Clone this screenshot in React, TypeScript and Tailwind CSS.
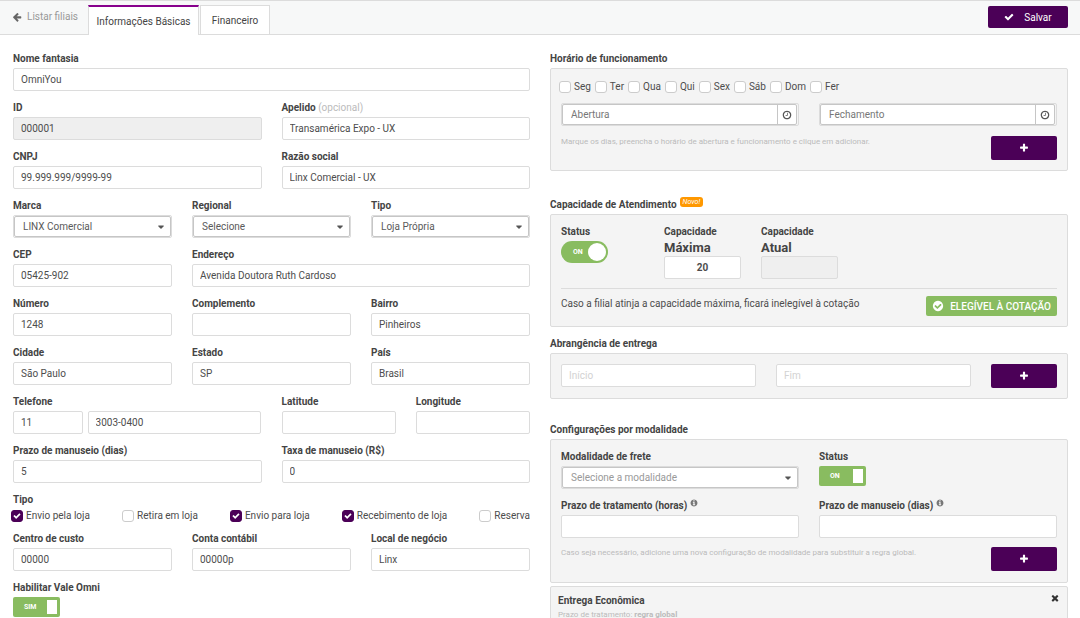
import type { ReactNode } from "react";

const CIRCLE =
  "q0 209-103 385.5t-279.5 279.5-385.5 103-385.5-103-279.5-279.5-103-385.5 103-385.5 279.5-279.5 385.5-103 385.5 103 279.5 279.5 103 385.5z";

const ICONS = {
  check:
    "M1671 566q0 40-28 68l-724 724-136 136q-28 28-68 28t-68-28l-136-136-362-362q-28-28-28-68t28-68l136-136q28-28 68-28t68 28l294 295 656-657q28-28 68-28t68 28l136 136q28 28 28 68z",
  plus: "M1600 736v192q0 40-28 68t-68 28h-416v416q0 40-28 68t-68 28h-192q-40 0-68-28t-28-68v-416h-416q-40 0-68-28t-28-68v-192q0-40 28-68t68-28h416v-416q0-40 28-68t68-28h192q40 0 68 28t28 68v416h416q40 0 68 28t28 68z",
  times:
    "M1490 1322q0 40-28 68l-136 136q-28 28-68 28t-68-28l-294-294-294 294q-28 28-68 28t-68-28l-136-136q-28-28-28-68t28-68l294-294-294-294q-28-28-28-68t28-68l136-136q28-28 68-28t68 28l294 294 294-294q28-28 68-28t68 28l136 136q28 28 28 68t-28 68l-294 294 294 294q28 28 28 68z",
  arrowLeft:
    "M1664 896v128q0 53-32.5 90.5t-84.5 37.5h-704l293 294q38 36 38 90t-38 90l-75 76q-37 37-90 37-52 0-91-37l-651-652q-37-37-37-90 0-52 37-91l651-650q38-38 91-38 52 0 90 38l75 74q38 38 38 91t-38 91l-293 293h704q52 0 84.5 37.5t32.5 90.5z",
  caret:
    "M1408 704q0 26-19 45l-448 448q-19 19-45 19t-45-19l-448-448q-19-19-19-45t19-45 45-19h896q26 0 45 19t19 45z",
  checkCircle:
    "M1412 734q0-28-18-46l-91-90q-19-19-45-19t-45 19l-408 407-226-226q-19-19-45-19t-45 19l-91 90q-18 18-18 46 0 27 18 45l362 362q19 19 45 19 27 0 46-19l543-543q18-18 18-45zm252 162" +
    CIRCLE,
  info:
    "M1152 1376v-160q0-14-9-23t-23-9h-96v-512q0-14-9-23t-23-9h-320q-14 0-23 9t-9 23v160q0 14 9 23t23 9h96v320h-96q-14 0-23 9t-9 23v160q0 14 9 23t23 9h448q14 0 23-9t9-23zm-128-896v-160q0-14-9-23t-23-9h-192q-14 0-23 9t-9 23v160q0 14 9 23t23 9h192q14 0 23-9t9-23zm640 416" +
    CIRCLE,
  clock:
    "M1024 544v448q0 14-9 23t-23 9h-320q-14 0-23-9t-9-23v-64q0-14 9-23t23-9h224v-352q0-14 9-23t23-9h64q14 0 23 9t9 23zm416 352q0-148-73-273t-198-198-273-73-273 73-198 198-73 273 73 273 198 198 273 73 273-73 198-198 73-273zm224 0" +
    CIRCLE,
};

const Icon = ({ name, className }: { name: keyof typeof ICONS; className: string }) => (
  <svg viewBox="0 0 1792 1792" fill="currentColor" className={className} aria-hidden="true">
    <path d={ICONS[name]} />
  </svg>
);

const labelClass = "block font-bold leading-4 text-[#444]";
const inputClass =
  "block h-[23px] w-full min-w-0 rounded-xs border border-[#dcdcdc] bg-white px-[7px] text-[#4d4d4d] placeholder:text-[#d2d2d2] disabled:bg-[#efefef] outline-none";

type FieldProps = {
  id: string;
  label: ReactNode;
  value?: string;
  disabled?: boolean;
  className?: string;
};

const Field = ({ id, label, value = "", disabled, className }: FieldProps) => (
  <div className={className}>
    <label htmlFor={id} className={labelClass}>
      {label}
    </label>
    <input id={id} type="text" defaultValue={value} disabled={disabled} className={`${inputClass} mt-px`} />
  </div>
);

const SelectField = ({ id, label, value, muted }: { id: string; label: string; value: string; muted?: boolean }) => (
  <div>
    <label htmlFor={id} className={labelClass}>
      {label}
    </label>
    <div className="relative mt-px rounded-xs border border-[#dcdcdc]">
      <select
        id={id}
        className={`block h-[21px] w-full appearance-none rounded-xs border border-[#c6c6c6] bg-white pr-5 pl-2 outline-none ${
          muted ? "text-[#999]" : "text-[#5a5a5a]"
        }`}
      >
        <option>{value}</option>
      </select>
      <Icon name="caret" className="pointer-events-none absolute top-1.5 right-[5px] size-2.5 text-[#555]" />
    </div>
  </div>
);

const Check = ({ label, checked }: { label: string; checked?: boolean }) => (
  <label className="flex h-[13px] items-center gap-[3px] text-[#4d4d4d]">
    <span className="relative block size-3">
      <input
        type="checkbox"
        defaultChecked={checked}
        className="peer block size-3 appearance-none rounded-[3px] border border-[#ccc] bg-white checked:border-[#4b0057] checked:bg-[#4b0057]"
      />
      <Icon name="check" className="pointer-events-none absolute top-0.5 left-0.5 hidden size-2 text-white peer-checked:block" />
    </span>
    {label}
  </label>
);

const Toggle = ({ id, text }: { id: string; text: string }) => (
  <label
    htmlFor={id}
    className="mt-px flex h-5 w-[47px] items-center justify-between rounded-xs bg-[#89bc60] pr-[3px] pl-[11px] text-[7px] font-bold text-white"
  >
    <input id={id} type="checkbox" defaultChecked className="sr-only" />
    <span>{text}</span>
    <span className="h-3.5 w-2.5 bg-white" />
  </label>
);

const TimeField = ({ id, placeholder }: { id: string; placeholder: string }) => (
  <div className="rounded-xs border border-[#dcdcdc] pr-px">
    <div className="flex h-[21px] rounded-xs border border-[#c6c6c6] bg-white">
      <input
        id={id}
        type="text"
        aria-label={placeholder}
        placeholder={placeholder}
        className="min-w-0 flex-1 px-2 outline-none placeholder:text-[#777]"
      />
      <button type="button" aria-label="Escolher horário" className="flex w-[19px] items-center justify-center border-l border-[#c6c6c6]">
        <Icon name="clock" className="size-2.5 text-[#555]" />
      </button>
    </div>
  </div>
);

const AddButton = () => (
  <button type="button" aria-label="Adicionar" className="flex h-6 w-[66px] shrink-0 items-center justify-center rounded-xs bg-[#4b0057] text-white">
    <Icon name="plus" className="size-2.5" />
  </button>
);

const InfoLabel = ({ text }: { text: string }) => (
  <>
    {text} <Icon name="info" className="mb-1.5 inline size-2 text-[#777]" />
  </>
);

const panelClass = "rounded-xs border border-[#dcdcdc] bg-[#f4f4f4] px-2.5";
const days = ["Seg", "Ter", "Qua", "Qui", "Sex", "Sáb", "Dom", "Fer"];

const Header = () => (
  <header className="flex h-[35px] items-end border-y border-[#dcdcdc] bg-[#f7f8f8]">
    <a href="#" className="mb-2.5 ml-3 flex w-[76px] items-center gap-[5px] text-[#999]">
      <Icon name="arrowLeft" className="size-2.5 text-[#666]" />
      Listar filiais
    </a>
    <nav className="-mb-px flex items-end gap-px text-[#444]">
      <a
        href="#"
        className="flex h-[30px] w-[111px] items-center justify-center border-x border-t-2 border-x-[#dcdcdc] border-t-[#87008c] bg-white"
      >
        Informações Básicas
      </a>
      <a href="#" className="flex h-[30px] w-[70px] items-center justify-center border border-[#dcdcdc] bg-white">
        Financeiro
      </a>
    </nav>
    <button type="button" className="mr-3 mb-1.5 ml-auto flex h-[22px] w-20 items-center justify-center gap-2.5 rounded-xs bg-[#4b0057] text-white">
      <Icon name="check" className="size-2.5" />
      Salvar
    </button>
  </header>
);

const StoreForm = () => (
  <div className="flex flex-col gap-[9px]">
    <Field id="nome" label="Nome fantasia" value="OmniYou" />
    <div className="grid grid-cols-2 gap-x-5 gap-y-[9px]">
      <Field id="id" label="ID" value="000001" disabled />
      <Field
        id="apelido"
        label={
          <>
            Apelido <span className="font-normal text-[#bbb]">(opcional)</span>
          </>
        }
        value="Transamérica Expo - UX"
      />
      <Field id="cnpj" label="CNPJ" value="99.999.999/9999-99" />
      <Field id="razao" label="Razão social" value="Linx Comercial - UX" />
    </div>
    <div className="grid grid-cols-3 gap-x-5 gap-y-[9px]">
      <SelectField id="marca" label="Marca" value="LINX Comercial" />
      <SelectField id="regional" label="Regional" value="Selecione" />
      <SelectField id="tipo" label="Tipo" value="Loja Própria" />
      <Field id="cep" label="CEP" value="05425-902" />
      <Field id="endereco" label="Endereço" value="Avenida Doutora Ruth Cardoso" className="col-span-2" />
      <Field id="numero" label="Número" value="1248" />
      <Field id="complemento" label="Complemento" />
      <Field id="bairro" label="Bairro" value="Pinheiros" />
      <Field id="cidade" label="Cidade" value="São Paulo" />
      <Field id="estado" label="Estado" value="SP" />
      <Field id="pais" label="País" value="Brasil" />
    </div>
    <div className="grid grid-cols-2 gap-x-5 gap-y-[9px]">
      <div>
        <label htmlFor="ddd" className={labelClass}>
          Telefone
        </label>
        <div className="mt-px grid grid-cols-[2fr_5fr] gap-[5px]">
          <input id="ddd" type="text" defaultValue="11" className={inputClass} />
          <input type="text" aria-label="Número de telefone" defaultValue="3003-0400" className={inputClass} />
        </div>
      </div>
      <div className="grid grid-cols-2 gap-5">
        <Field id="latitude" label="Latitude" />
        <Field id="longitude" label="Longitude" />
      </div>
      <Field id="prazo" label="Prazo de manuseio (dias)" value="5" />
      <Field id="taxa" label="Taxa de manuseio (R$)" value="0" />
    </div>
    <fieldset>
      <legend className={labelClass}>Tipo</legend>
      <div className="mt-px -ml-0.5 flex justify-between">
        <Check label="Envio pela loja" checked />
        <Check label="Retira em loja" />
        <Check label="Envio para loja" checked />
        <Check label="Recebimento de loja" checked />
        <Check label="Reserva" />
      </div>
    </fieldset>
    <div className="grid grid-cols-3 gap-5">
      <Field id="custo" label="Centro de custo" value="00000" />
      <Field id="conta" label="Conta contábil" value="00000p" />
      <Field id="local" label="Local de negócio" value="Linx" />
    </div>
    <div>
      <label htmlFor="vale" className={labelClass}>
        Habilitar Vale Omni
      </label>
      <Toggle id="vale" text="SIM" />
    </div>
  </div>
);

const OpeningHours = () => (
  <section>
    <h2 className={labelClass}>Horário de funcionamento</h2>
    <div className={`${panelClass} mt-px pt-[11px] pb-2.5`}>
      <div className="-ml-0.5 flex gap-1">
        {days.map((day) => (
          <Check key={day} label={day} />
        ))}
      </div>
      <div className="mt-2.5 grid grid-cols-2 gap-5">
        <TimeField id="abertura" placeholder="Abertura" />
        <TimeField id="fechamento" placeholder="Fechamento" />
      </div>
      <div className="mt-2.5 flex justify-between">
        <p className="text-[8px] leading-3 text-[#bbb]">
          Marque os dias, preencha o horário de abertura e funcionamento e clique em adicionar.
        </p>
        <AddButton />
      </div>
    </div>
  </section>
);

const Capacity = () => (
  <section className="mt-[26px]">
    <h2 className={`${labelClass} flex gap-[3px]`}>
      Capacidade de Atendimento
      <span className="h-2.5 rounded-[3px] bg-[#ff9800] px-[3px] text-[7px] leading-2.5 font-normal text-white italic">Novo!</span>
    </h2>
    <div className={`${panelClass} mt-px pt-[9px] pb-2.5`}>
      <div className="flex gap-5 border-b border-[#dcdcdc] pb-[9px]">
        <div className="w-[83px]">
          <label htmlFor="status" className={labelClass}>
            Status
          </label>
          <label
            htmlFor="status"
            className="mt-px flex h-[22px] w-[47px] items-center justify-between rounded-full bg-[#89bc60] pr-0.5 pl-3 text-[7px] font-bold text-white"
          >
            <input id="status" type="checkbox" defaultChecked className="sr-only" />
            <span>ON</span>
            <span className="size-[18px] rounded-full bg-white" />
          </label>
        </div>
        <div className="w-[77px]">
          <label htmlFor="maxima" className={labelClass}>
            Capacidade
            <span className="block text-[13px] leading-[15px]">Máxima</span>
          </label>
          <input id="maxima" type="text" defaultValue="20" className={`${inputClass} mt-px text-center font-bold`} />
        </div>
        <div className="w-[77px]">
          <label htmlFor="atual" className={labelClass}>
            Capacidade
            <span className="block text-[13px] leading-[15px]">Atual</span>
          </label>
          <input id="atual" type="text" disabled className={`${inputClass} mt-px`} />
        </div>
      </div>
      <div className="mt-[7px] flex items-start justify-between">
        <p className="leading-[15px] text-[#4d4d4d]">Caso a filial atinja a capacidade máxima, ficará inelegível à cotação</p>
        <span className="flex h-5 items-center gap-1.5 rounded-xs bg-[#89bc60] px-1.5 font-medium text-white">
          <Icon name="checkCircle" className="size-3" />
          ELEGÍVEL À COTAÇÃO
        </span>
      </div>
    </div>
  </section>
);

const Coverage = () => (
  <section className="mt-[9px]">
    <h2 className={labelClass}>Abrangência de entrega</h2>
    <div className={`${panelClass} mt-px flex gap-5 py-2.5`}>
      <input type="text" aria-label="Início" placeholder="Início" className={inputClass} />
      <input type="text" aria-label="Fim" placeholder="Fim" className={inputClass} />
      <AddButton />
    </div>
  </section>
);

const Modality = () => (
  <section className="mt-[23px]">
    <h2 className={labelClass}>Configurações por modalidade</h2>
    <div className={`${panelClass} mt-px pt-[9px] pb-[11px]`}>
      <div className="grid grid-cols-2 gap-x-5 gap-y-[9px]">
        <SelectField id="modalidade" label="Modalidade de frete" value="Selecione a modalidade" muted />
        <div>
          <label htmlFor="modalidade-status" className={labelClass}>
            Status
          </label>
          <Toggle id="modalidade-status" text="ON" />
        </div>
        <Field id="tratamento" label={<InfoLabel text="Prazo de tratamento (horas)" />} />
        <Field id="manuseio" label={<InfoLabel text="Prazo de manuseio (dias)" />} />
      </div>
      <div className="mt-[9px] flex justify-between">
        <p className="text-[8px] leading-3 text-[#bbb]">
          Caso seja necessário, adicione uma nova configuração de modalidade para substituir a regra global.
        </p>
        <AddButton />
      </div>
    </div>
    <div className="mt-[3px] flex items-start justify-between rounded-xs border border-[#dcdcdc] bg-[#f4f4f4] px-[7px] py-1.5">
      <div>
        <h3 className={labelClass}>Entrega Econômica</h3>
        <p className="text-[8px] leading-3 text-[#bbb]">
          Prazo de tratamento: <b>regra global</b>
        </p>
      </div>
      <button type="button" aria-label="Remover">
        <Icon name="times" className="size-2.5 text-[#333]" />
      </button>
    </div>
  </section>
);

const App = () => {
  return (
    <div className="bg-white font-['Roboto',sans-serif] text-[10px] leading-[15px]">
      <Header />
      <main className="grid grid-cols-[517fr_518fr] gap-5 pt-4 pr-3 pl-[13px]">
        <StoreForm />
        <div>
          <OpeningHours />
          <Capacity />
          <Coverage />
          <Modality />
        </div>
      </main>
    </div>
  );
};

export default App;
